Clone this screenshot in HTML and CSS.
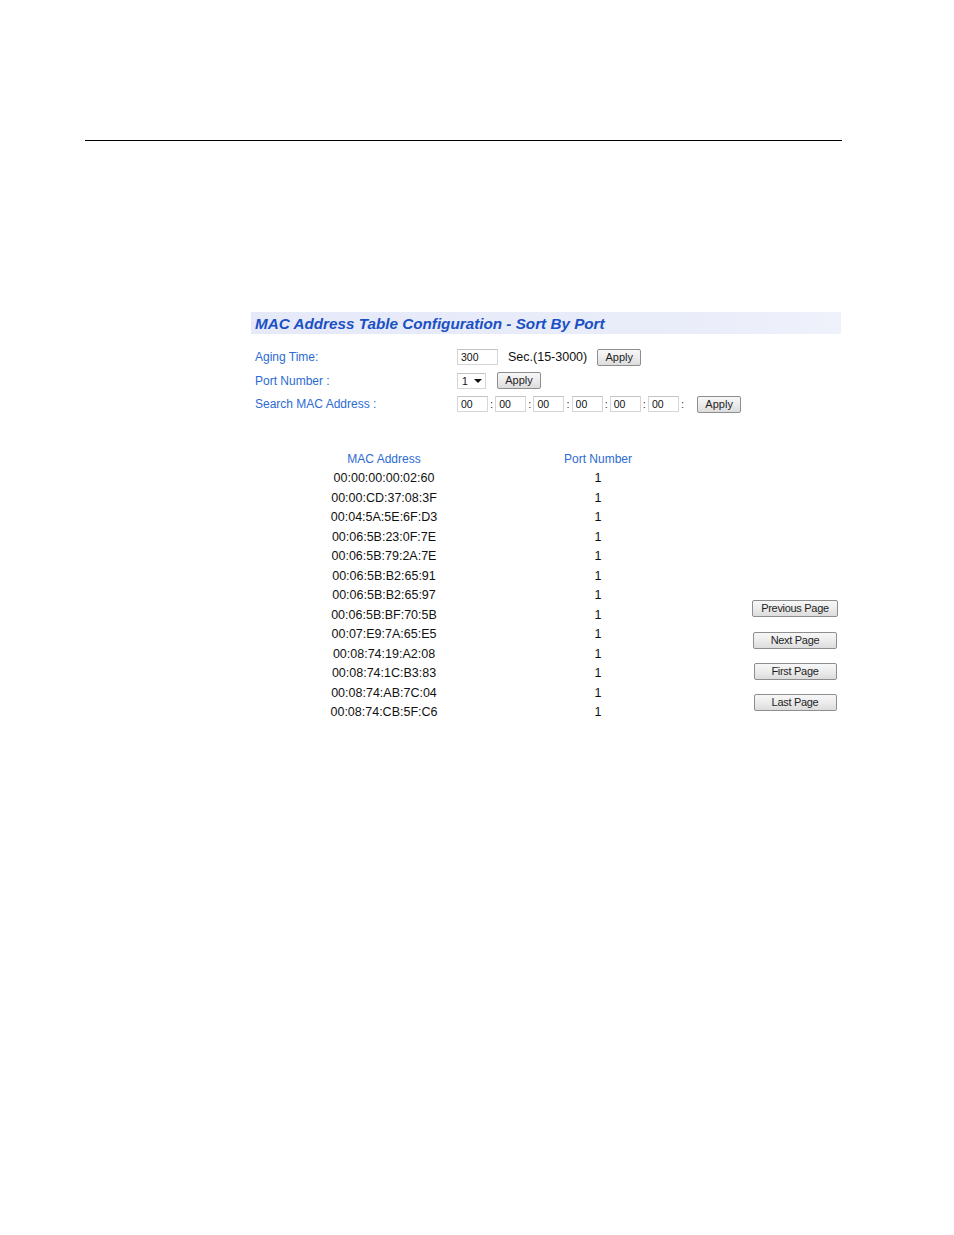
FILE: index.html
```html
<!DOCTYPE html>
<html>
<head>
<meta charset="utf-8">
<title>MAC Address Table Configuration</title>
<link rel="stylesheet" href="styles.css">
</head>
<body>
<div class="rule"></div>
<div class="panel">
  <div class="title-bar">MAC Address Table Configuration - Sort By Port</div>
  <div class="form">
    <div class="row">
      <div class="label">Aging Time:</div>
      <input class="field aging" type="text" value="300">
      <span class="unit">Sec.(15-3000)</span>
      <button class="btn apply">Apply</button>
    </div>
    <div class="row">
      <div class="label">Port Number :</div>
      <span class="select">1<span class="caret"></span></span>
      <button class="btn apply apply-port">Apply</button>
    </div>
    <div class="row">
      <div class="label">Search MAC Address :</div>
      <input class="field mac" type="text" value="00"><span class="colon">:</span>
      <input class="field mac" type="text" value="00"><span class="colon">:</span>
      <input class="field mac" type="text" value="00"><span class="colon">:</span>
      <input class="field mac" type="text" value="00"><span class="colon">:</span>
      <input class="field mac" type="text" value="00"><span class="colon">:</span>
      <input class="field mac" type="text" value="00"><span class="colon">:</span>
      <button class="btn apply apply-mac">Apply</button>
    </div>
  </div>
  <div class="table-area">
    <div class="table">
      <div class="th">MAC Address</div><div class="th">Port Number</div>
      <div class="td">00:00:00:00:02:60</div><div class="td">1</div>
      <div class="td">00:00:CD:37:08:3F</div><div class="td">1</div>
      <div class="td">00:04:5A:5E:6F:D3</div><div class="td">1</div>
      <div class="td">00:06:5B:23:0F:7E</div><div class="td">1</div>
      <div class="td">00:06:5B:79:2A:7E</div><div class="td">1</div>
      <div class="td">00:06:5B:B2:65:91</div><div class="td">1</div>
      <div class="td">00:06:5B:B2:65:97</div><div class="td">1</div>
      <div class="td">00:06:5B:BF:70:5B</div><div class="td">1</div>
      <div class="td">00:07:E9:7A:65:E5</div><div class="td">1</div>
      <div class="td">00:08:74:19:A2:08</div><div class="td">1</div>
      <div class="td">00:08:74:1C:B3:83</div><div class="td">1</div>
      <div class="td">00:08:74:AB:7C:04</div><div class="td">1</div>
      <div class="td">00:08:74:CB:5F:C6</div><div class="td">1</div>
    </div>
    <div class="pager">
      <button class="btn page prev">Previous Page</button>
      <button class="btn page next">Next Page</button>
      <button class="btn page first">First Page</button>
      <button class="btn page last">Last Page</button>
    </div>
  </div>
</div>
</body>
</html>
```
FILE: styles.css
```css
html, body {
  margin: 0;
  padding: 0;
  background: #ffffff;
  font-family: "Liberation Sans", Arial, sans-serif;
}

.rule {
  margin: 140px 0 0 85px;
  width: 757px;
  height: 0;
  border-top: 1px solid #000000;
}

.panel {
  margin: 171px 0 0 251px;
  width: 590px;
}

.title-bar {
  height: 22px;
  line-height: 23px;
  padding-left: 4px;
  background: linear-gradient(to right, #e6e9f8 0%, #e9ecf9 70%, #eff1fb 100%);
  color: #1a50c4;
  font-size: 15.25px;
  font-weight: bold;
  font-style: italic;
  white-space: nowrap;
}

.form {
  margin-top: 11.5px;
}

.row {
  display: flex;
  align-items: center;
  height: 23.5px;
}

.label {
  width: 202px;
  padding-left: 4px;
  color: #2b6bd3;
  font-size: 12px;
  white-space: nowrap;
}

.field {
  box-sizing: border-box;
  height: 16px;
  margin: 0;
  padding: 0 0 0 3px;
  border: 1px solid #d6d6d6;
  border-top-color: #c4c4c4;
  background: #ffffff;
  color: #111111;
  font-family: "Liberation Sans", Arial, sans-serif;
  font-size: 10.5px;
  outline: none;
}

.aging {
  width: 41px;
}

.mac {
  width: 31px;
}

.unit {
  margin-left: 10px;
  color: #111111;
  font-size: 12.5px;
  white-space: nowrap;
}

.colon {
  display: inline-block;
  width: 7.2px;
  text-align: center;
  color: #333333;
  font-size: 11px;
}

.btn {
  box-sizing: border-box;
  margin: 0;
  padding: 0;
  height: 17px;
  border: 1px solid #8e8e8e;
  border-radius: 2px;
  background: linear-gradient(#f7f7f7 0%, #ececec 50%, #dcdcdc 100%);
  color: #1e1e1e;
  font-family: "Liberation Sans", Arial, sans-serif;
  font-size: 11px;
  line-height: 15px;
  cursor: default;
}

.apply {
  width: 44px;
  margin-left: 10px;
}

.apply-port {
  margin-left: 11px;
}

.apply-mac {
  margin-left: 11px;
}

.select {
  box-sizing: border-box;
  position: relative;
  display: inline-block;
  width: 29px;
  height: 16px;
  padding-left: 4px;
  border: 1px solid #d6d6d6;
  border-top-color: #c4c4c4;
  background: #ffffff;
  color: #111111;
  font-size: 10.5px;
  line-height: 14px;
}

.caret {
  position: absolute;
  left: 16px;
  top: 5px;
  width: 0;
  height: 0;
  border-left: 4px solid transparent;
  border-right: 4px solid transparent;
  border-top: 4px solid #111111;
}

.table-area {
  display: flex;
  margin-top: 32.75px;
}

.table {
  display: grid;
  grid-template-columns: 128px 100px;
  column-gap: 100px;
  margin-left: 69px;
  grid-auto-rows: 19.5px;
  align-items: center;
}

.th {
  text-align: center;
  color: #2b6bd3;
  font-size: 12px;
  white-space: nowrap;
}

.td {
  text-align: center;
  color: #111111;
  font-size: 12.5px;
  white-space: nowrap;
}

.pager {
  display: flex;
  flex-direction: column;
  align-items: center;
  align-self: flex-end;
  width: 90px;
  margin-left: 102px;
  margin-bottom: 10.5px;
  gap: 14.3px;
}

.page {
  letter-spacing: -0.3px;
}

.prev {
  width: 86px;
}

.next {
  width: 84px;
}

.first,
.last {
  width: 83px;
}
```
